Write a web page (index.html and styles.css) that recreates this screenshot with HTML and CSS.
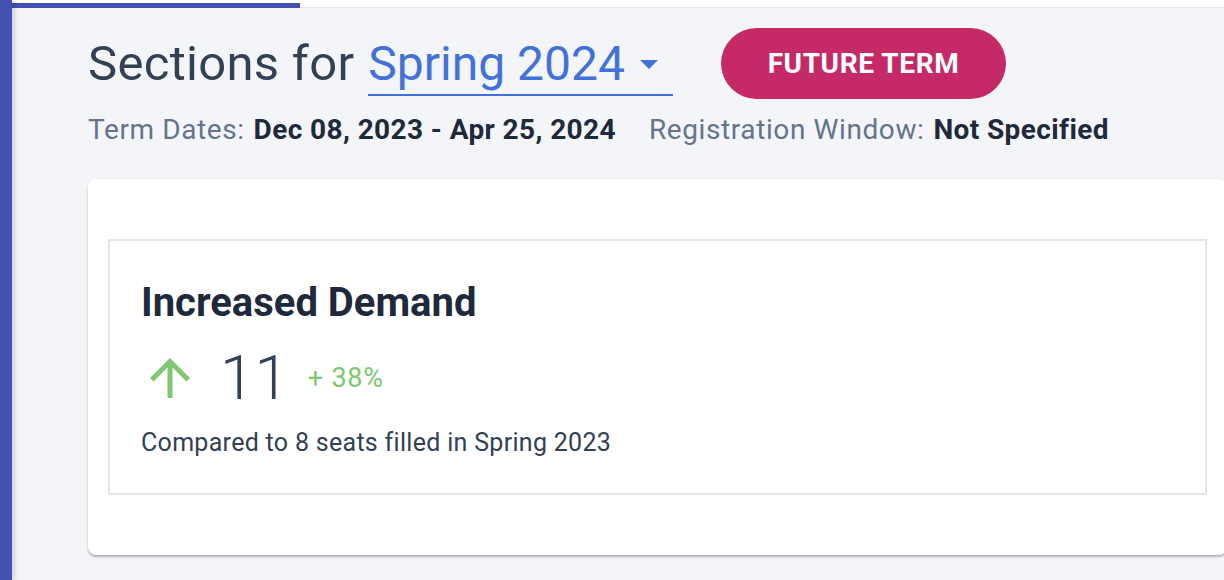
FILE: index.html
```html
<!DOCTYPE html>
<html lang="en">
<head>
  <meta charset="UTF-8">
  <meta name="viewport" content="width=device-width, initial-scale=1.0">
  <title>Sections</title>
  <link rel="stylesheet" href="styles.css">
</head>
<body>

<aside class="side-rail"></aside>

<main class="main">
  <div class="top-strip">
    <div class="progress"></div>
  </div>

  <section class="page">
    <div class="title-row">
      <h1 class="page-title">Sections for</h1>
      <div class="term-select">
        <span>Spring 2024</span>
        <svg class="caret" width="18" height="9" viewBox="0 0 18 9"><path d="M0 0h18L9 9z" fill="currentColor"/></svg>
      </div>
      <span class="term-badge">FUTURE TERM</span>
    </div>

    <div class="term-meta">
      <span class="meta-label">Term Dates:</span>
      <span class="meta-value">Dec 08, 2023 - Apr 25, 2024</span>
      <span class="meta-label spaced">Registration Window:</span>
      <span class="meta-value">Not Specified</span>
    </div>

    <div class="card">
      <div class="stat-box">
        <h2 class="stat-title">Increased Demand</h2>
        <div class="stat-row">
          <svg class="stat-arrow" width="60" height="60" viewBox="0 0 24 24"><path d="M4 12l1.41 1.41L11 7.83V20h2V7.83l5.58 5.59L20 12l-8-8-8 8z" fill="currentColor"/></svg>
          <span class="stat-number">11</span>
          <span class="stat-change">+ 38%</span>
        </div>
        <p class="stat-note">Compared to 8 seats filled in Spring 2023</p>
      </div>
    </div>
  </section>
</main>

</body>
</html>
```

FILE: styles.css
```css
body {
  font-family: Roboto, "Liberation Sans", sans-serif;
  margin: 0;
  background: #f3f5f9;
  display: flex;
  height: 580px;
  overflow: hidden;
}

.side-rail {
  width: 12px;
  flex-shrink: 0;
  background: #4351b0;
  box-shadow: 2px 0 6px rgba(0, 0, 0, 0.18);
  z-index: 2;
}

.main {
  flex: 1;
  min-width: 0;
}

.top-strip {
  height: 7px;
  background: #fff;
  border-bottom: 1px solid #e2e6ef;
  position: relative;
}

.progress {
  position: absolute;
  left: 0;
  bottom: -1px;
  width: 288px;
  height: 5px;
  background: #4351b0;
}

.page {
  padding: 20px 0 0 76px;
}

.title-row {
  display: flex;
  align-items: center;
  height: 71px;
}

.page-title {
  margin: 0;
  font-size: 49px;
  font-weight: 400;
  letter-spacing: 0.3px;
  color: #334155;
}

.term-select {
  display: flex;
  align-items: center;
  align-self: flex-start;
  margin: 8px 0 0 14px;
  padding: 0 15px 2px 0;
  line-height: 56px;
  border-bottom: 2px solid #4272d9;
  color: #4272d9;
  font-size: 48px;
}

.caret {
  margin-left: 15px;
}

.term-badge {
  margin-left: 48px;
  width: 285px;
  height: 71px;
  border-radius: 36px;
  background: #c52a66;
  color: #fff;
  font-size: 28px;
  font-weight: 700;
  display: flex;
  align-items: center;
  justify-content: center;
  letter-spacing: 0.6px;
}

.term-meta {
  margin-top: 14px;
  font-size: 28px;
  color: #64748b;
}

.meta-label {
  letter-spacing: 0.6px;
}

.meta-value {
  font-weight: 700;
  color: #1e293b;
  margin-left: 2px;
  letter-spacing: 0.4px;
}

.spaced {
  margin-left: 26px;
}

.card {
  margin-top: 33px;
  width: 1099px;
  background: #fff;
  border-radius: 8px;
  padding: 60px 20px;
  box-shadow: 0 2px 2px rgba(0, 0, 0, 0.25), 0 0 4px rgba(0, 0, 0, 0.04);
}

.stat-box {
  border: 2px solid #e2e6ef;
  padding: 38px 31px 0;
  box-sizing: border-box;
  height: 256px;
  color: #334155;
}

.stat-title {
  margin: 0;
  font-size: 40px;
  font-weight: 700;
  color: #1e293b;
}

.stat-row {
  display: flex;
  align-items: center;
  margin-top: 15px;
}

.stat-arrow {
  color: #7dc870;
  margin-left: -1px;
}

.stat-number {
  font-size: 62px;
  font-weight: 300;
  margin-left: 20px;
}

.stat-change {
  font-size: 27px;
  color: #7dc870;
  letter-spacing: 0.8px;
  margin-left: 19px;
}

.stat-note {
  margin: 14px 0 0;
  font-size: 25px;
  letter-spacing: 0.3px;
}
```
